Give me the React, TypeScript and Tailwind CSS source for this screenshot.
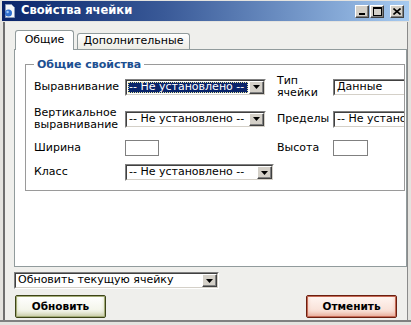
import React from "react";

function Arrow() {
  return (
    <span className="flex h-full w-[15px] shrink-0 items-center justify-center border border-t-white border-l-white border-b-[#404040] border-r-[#404040] bg-[#d4d0c8] shadow-[inset_-1px_-1px_0_#808080]">
      <svg width="7" height="4" viewBox="0 0 7 4">
        <path d="M0 0h7L3.5 4z" fill="#000" />
      </svg>
    </span>
  );
}

function Select({
  value,
  className,
  selected,
}: {
  value: string;
  className: string;
  selected?: boolean;
}) {
  return (
    <div
      className={`flex h-[17px] shrink-0 border border-t-[#808080] border-l-[#808080] border-b-white border-r-white ${className}`}
    >
      <div className="flex min-w-0 flex-1 border border-t-[#404040] border-l-[#404040] border-b-[#d4d0c8] border-r-[#d4d0c8] bg-white">
        <div className="flex min-w-0 flex-1 items-center overflow-hidden p-px">
          <span
            className={
              selected
                ? "flex h-full flex-1 items-center whitespace-nowrap bg-[#0a246a] pl-[1px] text-white outline-1 outline-dotted outline-[#e8e8a0] -outline-offset-1"
                : "whitespace-nowrap pl-[1px]"
            }
          >
            {value}
          </span>
        </div>
        <Arrow />
      </div>
    </div>
  );
}

function WinButton({ children, className }: { children: React.ReactNode; className?: string }) {
  return (
    <div
      className={`flex h-[13px] w-[14px] items-center justify-center border border-t-white border-l-white border-b-[#404040] border-r-[#404040] bg-[#d4d0c8] shadow-[inset_-1px_-1px_0_#808080] ${className ?? ""}`}
    >
      {children}
    </div>
  );
}

export default function App() {
  const notSet = "-- Не установлено --";

  return (
    <div className="h-[325px] w-[411px] overflow-hidden bg-[#e4e3df] font-['DejaVu_Sans',sans-serif] text-[11px] text-black">
      {/* Title bar */}
      <div className="h-[22px] px-[2px] pt-[1px]">
        <div className="flex h-[20px] items-center bg-linear-to-r from-[#0a246a] via-[#3a5a98] via-40% to-[#a6caf0] pl-[2px] pr-[5px]">
          <svg width="12" height="14" viewBox="0 0 12 14" className="shrink-0">
            <path d="M1.5 0.5h6l3 3v10h-9z" fill="#f4f6fa" stroke="#8a9ab8" />
            <circle cx="4.5" cy="9" r="3.5" fill="#2f6fd0" />
            <circle cx="3.6" cy="8" r="1.2" fill="#9cc4f4" />
          </svg>
          <span className="ml-[5px] text-[11.5px] font-bold text-white">Свойства ячейки</span>
          <div className="ml-auto flex items-center">
            <WinButton>
              <svg width="8" height="8" viewBox="0 0 8 8">
                <rect x="1" y="6" width="6" height="2" fill="#000" />
              </svg>
            </WinButton>
            <WinButton className="ml-[1px]">
              <svg width="9" height="9" viewBox="0 0 9 9">
                <rect x="0.5" y="0.5" width="8" height="8" fill="none" stroke="#000" />
                <rect x="0" y="0" width="9" height="2" fill="#000" />
              </svg>
            </WinButton>
            <WinButton className="ml-[6px]">
              <svg width="8" height="7" viewBox="0 0 8 7">
                <path d="M0.5 0.5l7 6M7.5 0.5l-7 6" stroke="#000" strokeWidth="1.6" />
              </svg>
            </WinButton>
          </div>
        </div>
      </div>

      {/* Body */}
      <div className="flex h-[298px]">
        <div className="w-[3px] bg-[#e4e3df]" />
        <div className="w-[2px] bg-[#6f6f6f]" />
        <div className="flex w-[402px] flex-col bg-[#efefec] pt-[8px]">
          {/* Tabs */}
          <div className="relative z-10 flex h-[20px] items-end pl-[10px]">
            <div className="flex h-[20px] w-[59px] items-center justify-center rounded-t-[3px] border border-b-0 border-[#919b9c] bg-white pb-[1px]">
              Общие
            </div>
            <div className="mb-px ml-[3px] flex h-[16px] w-[113px] items-center justify-center rounded-t-[3px] border border-b-0 border-[#919b9c] bg-linear-to-b from-white to-[#ecebe5]">
              Дополнительные
            </div>
          </div>

          {/* Panel */}
          <div className="-mt-px ml-[9px] h-[218px] w-[393px] shrink-0 overflow-hidden border border-[#919b9c] bg-white">
            <fieldset className="ml-[10px] mt-[8px] w-[380px] min-w-0 overflow-hidden border border-[#9a9a9a] pb-[8px] pl-[8px]">
              <legend className="px-[3px] font-bold leading-[13px] text-[#1c4f91]">Общие свойства</legend>

              <div className="mt-[4px] flex h-[24px] items-center">
                <span className="w-[91px] shrink-0">Выравнивание</span>
                <div className="w-[152px] shrink-0">
                  <Select value={notSet} className="w-[141px]" selected />
                </div>
                <span className="w-[56px] shrink-0 leading-[12px]">
                  Тип
                  <br />
                  ячейки
                </span>
                <Select value="Данные" className="w-[150px]" />
              </div>

              <div className="mt-[8px] flex h-[24px] items-center">
                <span className="w-[91px] shrink-0 leading-[12px]">
                  Вертикальное
                  <br />
                  выравнивание
                </span>
                <div className="w-[152px] shrink-0">
                  <Select value={notSet} className="w-[141px]" />
                </div>
                <span className="w-[56px] shrink-0">Пределы</span>
                <Select value={notSet} className="w-[150px]" />
              </div>

              <div className="mt-[7px] flex h-[20px] items-center">
                <span className="w-[91px] shrink-0">Ширина</span>
                <div className="w-[152px] shrink-0">
                  <div className="h-[16px] w-[34px] border border-[#808080] bg-white" />
                </div>
                <span className="w-[56px] shrink-0">Высота</span>
                <div className="h-[16px] w-[35px] border border-[#808080] bg-white" />
              </div>

              <div className="mt-[5px] flex h-[19px] items-center">
                <span className="w-[91px] shrink-0">Класс</span>
                <Select value={notSet} className="w-[149px]" />
              </div>
            </fieldset>
          </div>

          {/* Footer */}
          <div className="ml-[9px] mt-[5px]">
            <Select value="Обновить текущую ячейку" className="w-[205px]" />
          </div>
          <div className="mx-[10px] mt-[6px] flex justify-between">
            <button className="flex h-[23px] w-[91px] items-center justify-center rounded-[2px] border border-[#3d4418] bg-linear-to-b from-white to-[#eef0e0] text-[10.5px] font-bold shadow-[inset_0_0_0_1px_#a4ad78,inset_0_-3px_4px_#c7cba5]">
              Обновить
            </button>
            <button className="flex h-[23px] w-[91px] items-center justify-center rounded-[2px] border border-[#6b1f10] bg-linear-to-b from-[#fff6f2] to-[#f6d8cc] text-[10.5px] font-bold shadow-[inset_0_0_0_1px_#c46a55,inset_0_-3px_4px_#e8aa98]">
              Отменить
            </button>
          </div>
        </div>
        <div className="w-px bg-[#8a8a8a]" />
        <div className="w-[3px] bg-[#e4e3df]" />
      </div>

      {/* Bottom frame */}
      <div className="h-[2px] bg-[#808080]" />
      <div className="h-[3px] bg-[#e4e3df]" />
    </div>
  );
}
